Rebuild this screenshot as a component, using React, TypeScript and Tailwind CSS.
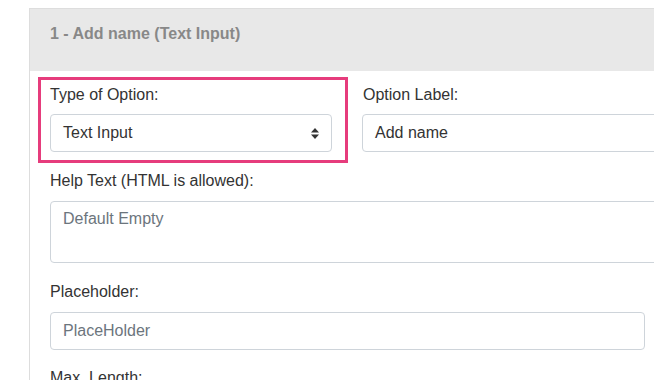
import React from "react";

function SortIcon() {
  return (
    <svg width="8" height="11" viewBox="0 0 8 11">
      <path d="M4 0 L8 4.5 L0 4.5 Z" fill="#333" />
      <path d="M4 11 L8 6.5 L0 6.5 Z" fill="#333" />
    </svg>
  );
}

export default function App() {
  return (
    <div
      className="w-[654px] h-[380px] overflow-hidden bg-white"
      style={{ fontFamily: '"Liberation Sans", Arial, sans-serif' }}
    >
      <div className="ml-[29px] mt-[8px] w-[700px] border border-[#dddddd] bg-white">
        <div className="h-[62px] bg-[#e8e8e8] pl-[20px] pt-[14px] text-[16px] leading-[22px] font-bold text-[#888888]">
          1 - Add name (Text Input)
        </div>
        <div className="pl-[20px] pt-[13px] text-[16px] leading-[22px] text-[#333333]">
          <div className="flex gap-[31px]">
            <div className="relative w-[282px]">
              <div className="pointer-events-none absolute left-[-12px] top-[-7px] h-[86px] w-[310px] border-[3px] border-[#e63c7c]" />
              <div className="mb-[8px] h-[22px]">Type of Option:</div>
              <div className="flex h-[38px] items-center justify-between rounded-[4px] border border-[#ced4da] pl-[12px] pr-[12px]">
                <span>Text Input</span>
                <SortIcon />
              </div>
            </div>
            <div className="flex-1 -ml-[1px]">
              <div className="mb-[8px] h-[22px] pl-[1px]">Option Label:</div>
              <div className="flex h-[38px] items-center rounded-[4px] border border-[#ced4da] pl-[12px]">
                Add name
              </div>
            </div>
          </div>
          <div className="mt-[18px] mb-[9px] h-[22px]">Help Text (HTML is allowed):</div>
          <div className="h-[62px] rounded-[4px] border border-[#ced4da] pl-[12px] pt-[6px] text-[#6c757d]">
            Default Empty
          </div>
          <div className="mt-[18px] mb-[9px] h-[22px]">Placeholder:</div>
          <div className="flex h-[38px] w-[595px] items-center rounded-[4px] border border-[#ced4da] pl-[12px] text-[#6c757d]">
            PlaceHolder
          </div>
          <div className="mt-[17px] h-[22px]">Max. Length:</div>
        </div>
      </div>
    </div>
  );
}
